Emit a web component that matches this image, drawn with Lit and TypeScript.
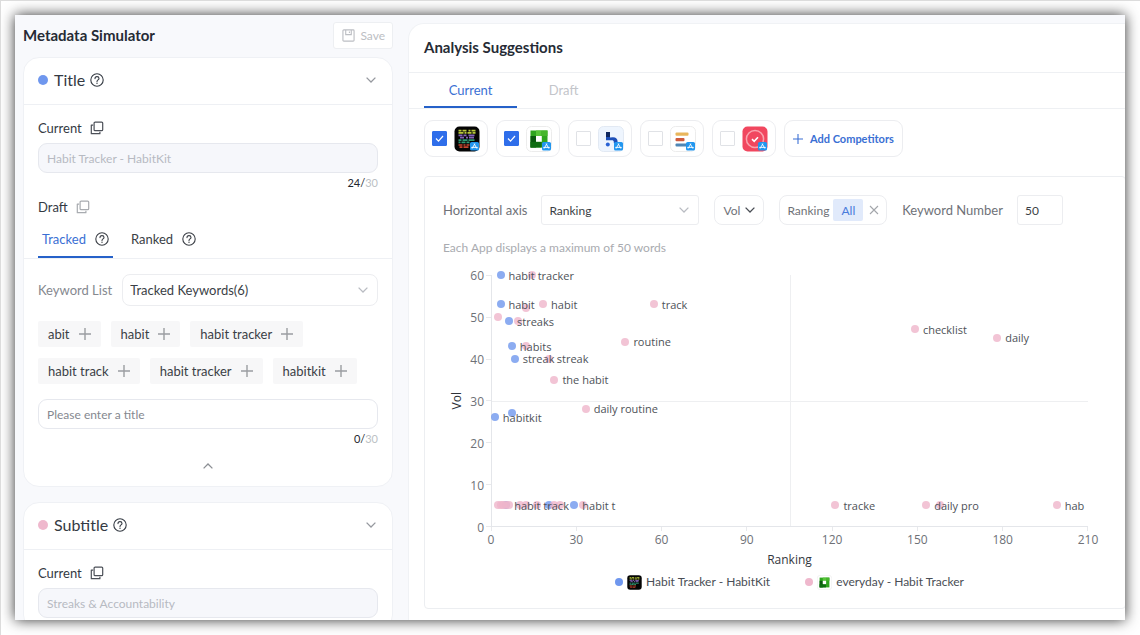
import { LitElement, html, svg, css, nothing } from "lit";
import { customElement, property } from "lit/decorators.js";

const helpIcon = svg`<svg class="help" viewBox="0 0 14 14" width="14" height="14" fill="none" stroke="currentColor" aria-hidden="true">
  <circle cx="7" cy="7" r="6.2" stroke-width="1.1"/>
  <path d="M5 5.6C5 4.4 5.8 3.6 7 3.6s2 .8 2 1.8c0 1.5-2 1.5-2 3.1" stroke-width="1.1" stroke-linecap="round"/>
  <circle cx="7" cy="10.3" r=".7" fill="currentColor" stroke="none"/></svg>`;

const copyIcon = svg`<svg viewBox="0 0 14 14" width="14" height="14" fill="none" stroke="currentColor" stroke-width="1.2" stroke-linejoin="round" aria-hidden="true">
  <rect x="4.1" y="1.1" width="8.6" height="8.6" rx="1"/><path d="M3.2 4.1H1.3v8.6h8.6v-1.9"/></svg>`;

const plusIcon = (size: number, width: number) => svg`<svg viewBox="0 0 12 12" width=${size} height=${size} fill="none" stroke="currentColor" stroke-width=${width} aria-hidden="true"><path d="M6 0v12M0 6h12"/></svg>`;

const chevron = (dir: "up" | "down") => svg`<svg class="chevron" viewBox="0 0 10 6" width="10" height="6" fill="none" stroke="currentColor" stroke-width="1.3" aria-hidden="true"><path d=${dir === "down" ? "M.6.6L5 5L9.4.6" : "M.6 5.4L5 1l4.4 4.4"}/></svg>`;

const storeBadge = svg`<rect x="16" y="16" width="9" height="8.6" rx="1.6" fill="#2196ef"/>
  <path d="M20.9 17.6l-2.8 5M20.1 17.6l2.8 5M17.2 21.4h6.6" stroke="#fff" stroke-width=".9" fill="none"/>`;

const art: Record<string, unknown> = {
  habitkit: svg`<rect x=".5" y=".5" width="25" height="25" rx="5" fill="#050505"/>
    <path d="M4.5 4.6h3m1 0h4m2 0h2m1 0h4M4.5 6.8h5m1 0h2m1 0h4m1 0h3" stroke="#b8c83c" stroke-width="1.7"/>
    <path d="M4.5 9.4h4m1 0h3m2 0h6M6 11.6h4m2 0h2m1 0h5" stroke="#8263b8" stroke-width="1.7"/>
    <path d="M4.5 14.2h3m1 0h5m1 0h6M4.5 16.4h2m1 0h4m1 0h3" stroke="#2f9a73" stroke-width="1.7"/>
    <path d="M4.5 19h4m1 0h2m1 0h3M5.5 21.2h3m1 0h5" stroke="#c9472f" stroke-width="1.7"/>`,
  everyday: svg`<rect x=".5" y=".5" width="25" height="25" rx="5" fill="#fff" stroke="#ececec"/>
    <path d="M4.5 4.5h17v17h-17z" fill="#2fa51f"/><path d="M4.5 10h5.6v11.5H4.5z" fill="#0b5a10"/>
    <path d="M4.5 16h11v5.5h-11z" fill="#0f6d12"/><path d="M10 4.5h5.6V10H10z" fill="#58c63a"/>
    <path d="M15.6 4.5h5.9V10h-5.9z" fill="#46b62c"/><path d="M10 10h5.8v5.8H10z" fill="#fff"/>`,
  blue: svg`<rect x=".5" y=".5" width="25" height="25" rx="5" fill="#eef5fe" stroke="#e2e9f3"/>
    <path d="M8 6h4v5.5l3-.3c3 0 4.6 1.8 4.6 4.4V17h-3.8v-1c0-1.3-.7-1.8-2-1.8H8z" fill="#1d4fb8"/><path d="M8 6h4v5H8z" fill="#10285f"/><circle cx="9.8" cy="18.4" r="2" fill="#2a62d4"/>`,
  bars: svg`<rect x=".5" y=".5" width="25" height="25" rx="5" fill="#fff" stroke="#ececec"/>
    <rect x="5.5" y="6.5" width="13" height="3.2" rx="1" fill="#e9b65c"/><rect x="5.5" y="12" width="9" height="3.2" rx="1" fill="#cf5a3c"/><rect x="5.5" y="17.6" width="13" height="3" rx="1" fill="#4f86b5"/>`,
  red: svg`<rect x=".5" y=".5" width="25" height="25" rx="5" fill="#f1475f"/>
    <circle cx="13" cy="13" r="8.6" fill="none" stroke="#f9a3ae" stroke-width="1.5"/><path d="M10 13.2l2.2 2.1 3.8-4" fill="none" stroke="#fff" stroke-width="1.6"/>`,
};

const appIcon = (kind: string, size = 26, badge = true) => svg`<svg viewBox="0 0 26 26" width=${size} height=${size} aria-hidden="true">${art[kind]}${badge ? storeBadge : nothing}</svg>`;

const common = css`
  :host { display: block; box-sizing: border-box; }
  *, *::before, *::after { box-sizing: border-box; }
  button, input, select { font: inherit; color: inherit; margin: 0; background: none; border: 0; padding: 0; outline: none; }
  h1, h2, p, ul { margin: 0; padding: 0; font-weight: inherit; font-size: inherit; list-style: none; }
  svg { display: block; flex: none; }
  select { appearance: none; width: 100%; border: 1px solid #ecedf0; background: #fff; }
  .pick { display: grid; align-items: center; color: #3b3f46; }
  .pick > * { grid-area: 1 / 1; }
  .pick .chevron { justify-self: end; margin-right: 10px; color: #b9bcc2; pointer-events: none; }
`;

interface Keyword { text: string }

@customElement("metadata-card")
class MetadataCard extends LitElement {
  @property() heading = "";
  @property() tone = "blue";
  @property() current = "";
  @property({ type: Boolean }) editable = false;
  @property({ attribute: false }) keywords: Keyword[] = [];

  static styles = [common, css`
    :host { background: #fff; border: 1px solid #eff1f5; border-radius: 16px; flex: none; font-size: 13px; }
    .head { display: flex; align-items: center; gap: 6px; height: 47px; padding: 0 14px 2px; border-bottom: 1px solid #eef0f4; font-size: 16px; line-height: 20px; color: #343a43; }
    .dot { width: 10px; height: 10px; border-radius: 50%; background: #6f97ee; }
    .pink { background: #efb8cd; }
    .head h2 { display: flex; align-items: center; gap: 5px; }
    .toggle { margin-left: auto; color: #96999f; padding: 6px 2px; }
    .body { padding: 13px 14px 12px; }
    .label { display: flex; align-items: center; gap: 8px; line-height: 20px; color: #343a43; }
    .copy { color: #4c5058; }
    .dim { color: #a8abb0; }
    .text { display: block; width: 100%; height: 30px; padding: 0 8px; border: 1px solid #e6e8ee; border-radius: 9px; font-size: 12px; background: #fff; }
    .text:disabled { background: #f6f7fb; color: #b7bac2; }
    .text::placeholder { color: #85888f; }
    .current { margin-top: 5px; }
    .count { text-align: right; font-size: 11px; line-height: 20px; color: #23272e; }
    .count span { color: #bcbfc4; }
    .draft { margin-top: 4px; }
    .tabs { display: flex; gap: 14px; margin: 4px -14px 0; padding: 0 14px; border-bottom: 1px solid #eef0f4; }
    .tab { display: flex; align-items: center; gap: 9px; height: 37px; padding: 0 4px; color: #3b3f46; border-bottom: 2px solid transparent; }
    .tab svg { color: #3b3f46; }
    .on { color: #3a6fd4; border-color: #2561c9; }
    .list { display: flex; align-items: center; gap: 10px; margin-top: 15px; color: #85888f; }
    .list .pick { flex: 1; }
    .list select { height: 32px; border-radius: 8px; padding: 0 7px; }
    .chips { display: flex; flex-wrap: wrap; gap: 11px 10px; margin: 15px 0; }
    .chip { display: flex; align-items: center; gap: 9px; height: 26px; padding: 0 10px; background: #f7f7f8; border-radius: 2px; color: #3b3f46; }
    .chip svg { color: #9b9da1; }
    .fold { display: block; margin: 9px auto 0; padding: 5px; color: #8c8f94; }
  `];

  render() {
    return html`
      <div class="head">
        <span class="dot ${this.tone}"></span>
        <h2>${this.heading} ${helpIcon}</h2>
        <button class="toggle" aria-label="Toggle ${this.heading}">${chevron("down")}</button>
      </div>
      <div class="body">
        <div class="label"><label for="current">Current</label><button class="copy" aria-label="Copy current">${copyIcon}</button></div>
        <input class="text current" id="current" disabled .value=${this.current}>
        ${this.editable ? this.draft() : nothing}
      </div>`;
  }

  draft() {
    return html`
      <p class="count">${this.current.length}/<span>30</span></p>
      <div class="label draft"><label for="draft">Draft</label><button class="dim" aria-label="Copy draft">${copyIcon}</button></div>
      <div class="tabs">
        <button class="tab on">Tracked ${helpIcon}</button>
        <button class="tab">Ranked ${helpIcon}</button>
      </div>
      <div class="list">
        <label for="list">Keyword List</label>
        <div class="pick"><select id="list"><option>Tracked Keywords(6)</option></select>${chevron("down")}</div>
      </div>
      <div class="chips">
        ${this.keywords.map((k) => html`<button class="chip">${k.text} ${plusIcon(12, 1.4)}</button>`)}
      </div>
      <input class="text" id="draft" placeholder="Please enter a title">
      <p class="count">0/<span>30</span></p>
      <button class="fold" aria-label="Collapse">${chevron("up")}</button>`;
  }
}

type Point = [x: number, y: number, label?: string];

const X_MAX = 210;
const Y_MAX = 60;
const everyday: Point[] = [
  [14, 60], [18, 53, "habit"], [12, 52], [2, 50], [9, 49], [57, 53, "track"], [47, 44, "routine"], [12, 43],
  [20, 40, "streak"], [22, 35, "the habit"], [33, 28, "daily routine"], [149, 47, "checklist"], [178, 45, "daily"],
  [2, 5], [3, 5], [4, 5], [5, 5], [6, 5], [10, 5], [12, 5], [16, 5], [22, 5], [24, 5], [32, 5],
  [121, 5, "tracke"], [153, 5, "daily pro"], [158, 5], [199, 5, "hab"],
];
const habitkit: Point[] = [
  [3, 60, "habit tracker"], [3, 53, "habit"], [6, 49, "streaks"], [7, 43, "habits"], [8, 40, "streak"],
  [1, 26, "habitkit"], [7, 27], [5, 5, "habit track"], [20, 5], [29, 5, "habit t"],
];

@customElement("keyword-chart")
class KeywordChart extends LitElement {
  static styles = [common, css`
    :host { padding: 0 37px 0 19px; color: #6e7177; }
    .grid { display: grid; grid-template-columns: 26px 14px 7px minmax(0, 1fr); grid-template-rows: 252px auto; font: 12px "Open Sans", sans-serif; }
    .yname { writing-mode: vertical-rl; transform: rotate(180deg); justify-self: center; align-self: center; line-height: 14px; color: #2e3238; }
    .ys, .yt { display: flex; flex-direction: column; justify-content: space-between; }
    .ys li { display: flex; height: 0; align-items: center; justify-content: flex-end; }
    .yt { padding-left: 2px; }
    .yt li { height: 1px; background: #e8e9ec; }
    .plot { position: relative; border-left: 1px solid #e4e6ea; border-bottom: 1px solid #e4e6ea; }
    .h, .v { position: absolute; background: #eeeff1; }
    .h { left: 0; right: 0; top: 50%; height: 1px; }
    .v { top: 0; bottom: 0; left: 50%; width: 1px; }
    .pt { position: absolute; width: 0; height: 0; display: flex; align-items: center; white-space: nowrap; }
    .pt::before { content: ""; flex: none; width: 8px; height: 8px; margin-left: -4px; border-radius: 50%; background: #efb5ca; opacity: .8; }
    .blue::before { background: #6f97ee; }
    .pt span { z-index: 1; margin-left: 4px; font-size: 11px; color: #4e5258; }
    .xs { grid-column: 4; display: flex; justify-content: space-between; }
    .xs li { display: flex; flex-direction: column; align-items: center; width: 0; line-height: 18px; }
    .xs li::before { content: ""; width: 1px; height: 4px; background: #e8e9ec; flex: none; }
    .foot { grid-column: 4; text-align: center; }
    .xname { line-height: 20px; padding-top: 1px; color: #34383e; font-size: 12px; }
    .legend { display: flex; justify-content: center; gap: 35px; margin-top: 2px; line-height: 20px; color: #4a4e55; font-family: Lato, sans-serif; }
    .legend li { display: flex; align-items: center; gap: 4px; }
    .legend li::before { content: ""; width: 8px; height: 8px; border-radius: 50%; background: #6f97ee; }
    .legend .p::before { background: #efb8cd; }
  `];

  dots(points: Point[], tone: string) {
    return points.map(([x, y, label]) => html`<div class="pt ${tone}" style="left:${(x / X_MAX) * 100}%;bottom:${(y / Y_MAX) * 100}%">${label ? html`<span>${label}</span>` : nothing}</div>`);
  }

  render() {
    return html`<div class="grid">
      <div class="yname">Vol</div>
      <ul class="ys">${[60, 50, 40, 30, 20, 10, 0].map((v) => html`<li>${v}</li>`)}</ul>
      <ul class="yt">${[60, 50, 40, 30, 20, 10, 0].map(() => html`<li></li>`)}</ul>
      <div class="plot"><i class="h"></i><i class="v"></i>${this.dots(habitkit, "blue")}${this.dots(everyday, "rose")}</div>
      <ul class="xs">${[0, 30, 60, 90, 120, 150, 180, 210].map((v) => html`<li>${v}</li>`)}</ul>
      <div class="foot">
        <p class="xname">Ranking</p>
        <ul class="legend">
          <li>${appIcon("habitkit", 15, false)}Habit Tracker - HabitKit</li>
          <li class="p">${appIcon("everyday", 15, false)}everyday - Habit Tracker</li>
        </ul>
      </div>
    </div>`;
  }
}

@customElement("app-root")
class AppRoot extends LitElement {
  static styles = [common, css`
    :host { height: 100vh; padding: 14px 15px 15px 14px; border: solid #dcdcdc; border-width: 1px 0 0 1px; background: #fff; font-family: Lato, sans-serif; color: #343a43; overflow: hidden; }
    .frame { display: grid; grid-template-columns: 378px minmax(0, 1fr); column-gap: 15px; height: 100%; padding: 7px 0 0 8px; background: #f8f9fc; box-shadow: 0 0 13px rgba(0, 0, 0, .8); overflow: hidden; }
    .side { display: flex; flex-direction: column; gap: 15px; width: 370px; min-height: 0; overflow: hidden; }
    .bar { display: flex; align-items: center; justify-content: space-between; margin-bottom: -7px; flex: none; }
    h1 { font-size: 15px; font-weight: 700; color: #262b35; line-height: 20px; padding-bottom: 2px; }
    .save { display: flex; align-items: center; gap: 5px; height: 27px; padding: 0 7px 0 8px; border: 1px solid #edeff2; border-radius: 3px; background: #fff; font-size: 12px; color: #bcbec3; }
    .main { background: #fff; border: 1px solid #f0f2f5; border-width: 1px 0 0 1px; border-radius: 16px 0 0 0; margin: 1px 0 0 -8px; min-width: 0; overflow: hidden; }
    .top { display: flex; align-items: center; height: 49px; padding: 0 15px; border-bottom: 1px solid #eef0f3; }
    .tabs { display: flex; height: 36px; padding: 0 15px; border-bottom: 1px solid #eef0f3; }
    .tab { width: 93px; font-size: 13px; color: #c3c5ca; border-bottom: 2px solid transparent; }
    .on { color: #3a6fd4; border-color: #2561c9; }
    .apps { display: flex; gap: 8px; padding: 11px 15px 0; }
    .app { display: flex; align-items: center; gap: 7px; height: 37px; padding: 0 7px; border: 1px solid #ecedf0; border-radius: 9px; }
    .app input { appearance: none; width: 15px; height: 15px; border: 1px solid #e0e2e6; border-radius: 1px; }
    .app input:checked { border-color: #2f6eea; background: #2f6eea url('data:image/svg+xml,<svg xmlns="http://www.w3.org/2000/svg" viewBox="0 0 13 13"><path d="M3 6.5l2.5 2.6L10 4" fill="none" stroke="white" stroke-width="1.2"/></svg>') center / 13px; }
    .add { padding: 0 8px; color: #3a6fd4; font-size: 11px; font-weight: 700; }
    .panel { margin: 19px -1px 10px 15px; border: 1px solid #eceef1; border-radius: 4px; padding-bottom: 16px; }
    .controls { display: flex; align-items: center; padding: 18px 18px 0; font-size: 13px; color: #6f7278; gap: 15px; white-space: nowrap; }
    .field { display: flex; align-items: center; gap: 14px; }
    .controls select, .controls input { height: 30px; font-size: 12px; }
    .axis select { padding: 0 7px; width: 158px; border-radius: 3px; }
    .vol select { padding: 0 8px; width: 50px; border-radius: 8px; color: #6f7278; }
    .vol .chevron { margin-right: 9px; color: #4a4e55; }
    .rank { display: flex; align-items: center; gap: 4px; height: 30px; padding: 0 7px; border: 1px solid #ecedf0; border-radius: 8px; font-size: 12px; }
    .all { background: #e1eafb; color: #4a7bdc; height: 22px; padding: 0 8px; border-radius: 2px; }
    .close { color: #a3a6ab; padding: 2px 0 2px 2px; }
    .num { width: 46px; border: 1px solid #ecedf0; border-radius: 3px; padding: 0 7px; color: #3b3f46; }
    .note { padding: 14px 18px 0; margin-bottom: 18px; font-size: 12px; line-height: 18px; color: #a9abb0; }
  `];

  keywords = ["abit", "habit", "habit tracker", "habit track", "habit tracker", "habitkit"].map((text) => ({ text }));
  apps = [
    { icon: "habitkit", name: "HabitKit", on: true }, { icon: "everyday", name: "everyday", on: true },
    { icon: "blue", name: "Habitify", on: false }, { icon: "bars", name: "Productive", on: false }, { icon: "red", name: "Done", on: false },
  ];

  render() {
    return html`<div class="frame">
      <section class="side">
        <div class="bar">
          <h1>Metadata Simulator</h1>
          <button class="save"><svg viewBox="0 0 14 14" width="13" height="13" fill="none" stroke="currentColor" stroke-width="1.2"><rect x="1" y="1" width="12" height="12" rx="1"/><path d="M4 1v5h6V1M8 2.6v1.6"/></svg>Save</button>
        </div>
        <metadata-card heading="Title" current="Habit Tracker - HabitKit" editable .keywords=${this.keywords}></metadata-card>
        <metadata-card heading="Subtitle" tone="pink" current="Streaks &amp; Accountability"></metadata-card>
      </section>
      <main class="main">
        <div class="top"><h1>Analysis Suggestions</h1></div>
        <div class="tabs"><button class="tab on">Current</button><button class="tab">Draft</button></div>
        <div class="apps">
          ${this.apps.map((a) => html`<label class="app"><input type="checkbox" aria-label=${a.name} .checked=${a.on}>${appIcon(a.icon)}</label>`)}
          <button class="app add">${plusIcon(10, 1.3)}Add Competitors</button>
        </div>
        <div class="panel">
          <div class="controls">
            <div class="field axis"><label for="axis">Horizontal axis</label><div class="pick"><select id="axis"><option>Ranking</option></select>${chevron("down")}</div></div>
            <div class="pick vol"><select aria-label="Vertical axis"><option>Vol</option></select>${chevron("down")}</div>
            <div class="rank"><span>Ranking</span><button class="all">All</button><button class="close" aria-label="Clear"><svg viewBox="0 0 10 10" width="10" height="10" stroke="currentColor" stroke-width="1.1"><path d="M1 1l8 8M9 1L1 9"/></svg></button></div>
            <div class="field"><label for="num">Keyword Number</label><input class="num" id="num" value="50"></div>
          </div>
          <p class="note">Each App displays a maximum of 50 words</p>
          <keyword-chart></keyword-chart>
        </div>
      </main>
    </div>`;
  }
}
